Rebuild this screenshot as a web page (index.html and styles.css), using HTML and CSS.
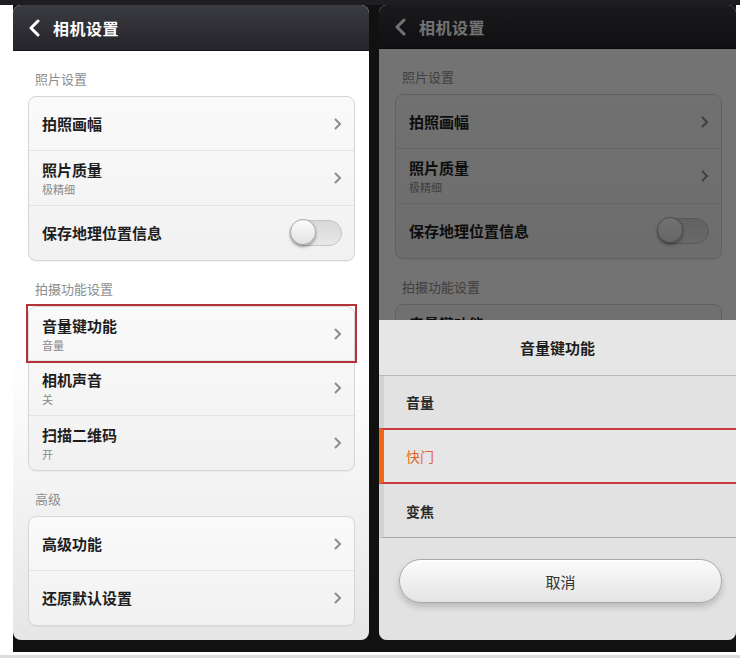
FILE: index.html
```html
<!DOCTYPE html>
<html lang="zh-CN">
<head>
  <meta charset="UTF-8">
  <title>相机设置</title>
  <link rel="stylesheet" href="styles.css">
</head>
<body>
  <div class="topstrip"></div>
  <div class="phones">

    <!-- left: settings list -->
    <div class="phone phone-left">
      <div class="screen">
        <div class="titlebar">
          <svg class="back" width="14" height="18" viewBox="0 0 14 18"><polyline points="11,2 4,9 11,16" fill="none" stroke="#fff" stroke-width="3" stroke-linecap="round" stroke-linejoin="round"/></svg>
          <span class="title">相机设置</span>
        </div>
        <div class="content">
          <div class="section">照片设置</div>
          <div class="card">
            <div class="row"><div class="text"><div class="name">拍照画幅</div></div><svg class="chev" width="9" height="14" viewBox="0 0 9 14"><polyline points="2,2 7,7 2,12" fill="none" stroke="#8c8c8c" stroke-width="2"/></svg></div>
            <div class="row"><div class="text"><div class="name">照片质量</div><div class="sub">极精细</div></div><svg class="chev" width="9" height="14" viewBox="0 0 9 14"><polyline points="2,2 7,7 2,12" fill="none" stroke="#8c8c8c" stroke-width="2"/></svg></div>
            <div class="row"><div class="text"><div class="name">保存地理位置信息</div></div><div class="toggle"><div class="knob"></div></div></div>
          </div>
          <div class="section">拍摄功能设置</div>
          <div class="card">
            <div class="row hl"><div class="text"><div class="name">音量键功能</div><div class="sub">音量</div></div><svg class="chev" width="9" height="14" viewBox="0 0 9 14"><polyline points="2,2 7,7 2,12" fill="none" stroke="#8c8c8c" stroke-width="2"/></svg></div>
            <div class="row"><div class="text"><div class="name">相机声音</div><div class="sub">关</div></div><svg class="chev" width="9" height="14" viewBox="0 0 9 14"><polyline points="2,2 7,7 2,12" fill="none" stroke="#8c8c8c" stroke-width="2"/></svg></div>
            <div class="row"><div class="text"><div class="name">扫描二维码</div><div class="sub">开</div></div><svg class="chev" width="9" height="14" viewBox="0 0 9 14"><polyline points="2,2 7,7 2,12" fill="none" stroke="#8c8c8c" stroke-width="2"/></svg></div>
          </div>
          <div class="section">高级</div>
          <div class="card">
            <div class="row"><div class="text"><div class="name">高级功能</div></div><svg class="chev" width="9" height="14" viewBox="0 0 9 14"><polyline points="2,2 7,7 2,12" fill="none" stroke="#8c8c8c" stroke-width="2"/></svg></div>
            <div class="row"><div class="text"><div class="name">还原默认设置</div></div><svg class="chev" width="9" height="14" viewBox="0 0 9 14"><polyline points="2,2 7,7 2,12" fill="none" stroke="#8c8c8c" stroke-width="2"/></svg></div>
          </div>
        </div>
      </div>
    </div>

    <!-- right: same list, dimmed, with the volume key sheet -->
    <div class="phone phone-right">
      <div class="screen">
        <div class="titlebar">
          <svg class="back" width="14" height="18" viewBox="0 0 14 18"><polyline points="11,2 4,9 11,16" fill="none" stroke="#fff" stroke-width="3" stroke-linecap="round" stroke-linejoin="round"/></svg>
          <span class="title">相机设置</span>
        </div>
        <div class="content">
          <div class="section">照片设置</div>
          <div class="card">
            <div class="row"><div class="text"><div class="name">拍照画幅</div></div><svg class="chev" width="9" height="14" viewBox="0 0 9 14"><polyline points="2,2 7,7 2,12" fill="none" stroke="#8c8c8c" stroke-width="2"/></svg></div>
            <div class="row"><div class="text"><div class="name">照片质量</div><div class="sub">极精细</div></div><svg class="chev" width="9" height="14" viewBox="0 0 9 14"><polyline points="2,2 7,7 2,12" fill="none" stroke="#8c8c8c" stroke-width="2"/></svg></div>
            <div class="row"><div class="text"><div class="name">保存地理位置信息</div></div><div class="toggle"><div class="knob"></div></div></div>
          </div>
          <div class="section">拍摄功能设置</div>
          <div class="card">
            <div class="row"><div class="text"><div class="name">音量键功能</div><div class="sub">音量</div></div></div>
          </div>
        </div>
        <div class="dim"></div>
        <div class="sheet">
          <div class="sheet-title">音量键功能</div>
          <div class="option">音量</div>
          <div class="option selected">快门</div>
          <div class="option">变焦</div>
          <div class="sheet-foot">
            <div class="cancel">取消</div>
          </div>
        </div>
      </div>
    </div>

  </div>
  <div class="floor"></div>
</body>
</html>
```

FILE: styles.css
```css
body {
  margin: 0;
  width: 750px;
  height: 667px;
  overflow: hidden;
  background: #fff;
  font-family: "Noto Sans CJK SC", "Noto Sans", sans-serif;
  color: #222;
}

.topstrip { width: 740px; height: 5px; background: #1e1e22; }

.phones { display: flex; }

.phone { background: #111; }
.phone-left { margin-left: 13px; width: 362px; padding: 0 6px 12px 0; box-sizing: border-box; }
.phone-right { width: 361px; padding: 0 0 11px 4px; box-sizing: border-box; }

.screen {
  position: relative;
  height: 635px;
  border-radius: 8px;
  overflow: hidden;
  display: flex;
  flex-direction: column;
  background: linear-gradient(#fff 55%, #e6e6e6);
}

.titlebar {
  height: 46px;
  flex: none;
  display: flex;
  align-items: center;
  padding-left: 14px;
  background: linear-gradient(#3b3b42, #24242a);
  border-bottom: 1px solid #15151a;
  box-sizing: border-box;
}
.back { margin-right: 12px; }
.title { color: #fff; font-size: 16px; font-weight: bold; letter-spacing: 0.5px; }

.content { padding: 0 14px 0 15px; }

.section {
  padding: 18px 0 0 7px;
  line-height: 20px;
  height: 20px;
  margin-bottom: 7px;
  font-size: 13px;
  color: #8e8e8e;
}

.card {
  border: 1px solid #d6d6d6;
  border-radius: 8px;
  background: linear-gradient(#fafafa, #f1f1f1);
  box-shadow: 0 1px 1px rgba(0,0,0,0.05);
}

.row {
  height: 54px;
  display: flex;
  align-items: center;
  justify-content: space-between;
  padding: 0 12px 0 13px;
  border-top: 1px solid #e3e3e3;
}
.row:first-child { border-top: none; height: 53px; }
.row.hl { outline: 2px solid #b3333b; outline-offset: 1px; }

.name { font-size: 15px; font-weight: bold; color: #1e1e1e; line-height: 20px; }
.sub { font-size: 11px; color: #8a8a8a; line-height: 14px; margin-top: 2px; }

.chev { flex: none; }

.toggle {
  width: 50px;
  height: 24px;
  border-radius: 13px;
  background: linear-gradient(#d8d8d8, #e8e8e8);
  border: 1px solid #c4c4c4;
  position: relative;
}
.knob {
  position: absolute;
  left: -1px;
  top: -2px;
  width: 26px;
  height: 26px;
  border-radius: 50%;
  background: linear-gradient(#fdfdfd, #e2e2e2);
  border: 1px solid #a8a8a8;
  box-sizing: border-box;
  box-shadow: 0 2px 3px rgba(0,0,0,0.35);
}

/* right phone: dimmed list + bottom sheet */
.phone-right .content { padding: 0 14px 0 16px; }
.phone-right .titlebar { height: 44px; }

.dim {
  position: absolute;
  inset: 0;
  background: rgba(0,0,0,0.55);
}

.sheet {
  position: absolute;
  left: 0;
  right: 0;
  bottom: 0;
  height: 320px;
  background: #e2e2e2;
  display: flex;
  flex-direction: column;
}

.sheet-title {
  height: 56px;
  flex: none;
  display: flex;
  align-items: center;
  justify-content: center;
  font-size: 15px;
  font-weight: bold;
  color: #1e1e1e;
  background: #e6e6e6;
  border-bottom: 1px solid #b9b9b9;
  box-sizing: border-box;
}

.option {
  height: 53px;
  flex: none;
  display: flex;
  align-items: center;
  padding-left: 22px;
  font-size: 14px;
  font-weight: bold;
  color: #2a2a2a;
  border-left: 5px solid #d3d3d3;
  box-sizing: border-box;
}
.option:nth-child(2) { height: 52px; }
.option + .option { border-top: 1px solid #cdcdcd; }
.option.selected {
  height: 56px;
  border-top: 2px solid #c8393c;
  border-bottom: 2px solid #c8393c;
  border-left: 5px solid #f3661a;
  color: #e0672b;
  font-weight: normal;
  background: #e6e6e6;
}
.option.selected + .option { border-top: none; height: 54px; border-bottom: 1px solid #a9a9a9; }

.sheet-foot { flex: 1; padding: 21px 14px 0 20px; }

.cancel {
  height: 44px;
  border-radius: 22px;
  border: 1px solid #a9a9a9;
  background: linear-gradient(#fbfbfb, #e4e4e4);
  box-shadow: 0 4px 6px rgba(0,0,0,0.18), inset 0 1px 0 #fff;
  display: flex;
  align-items: center;
  justify-content: center;
  font-size: 15px;
  color: #333;
  box-sizing: border-box;
}

.floor { width: 740px; height: 3px; margin-top: 3px; background: #dcdcdc; }
```
